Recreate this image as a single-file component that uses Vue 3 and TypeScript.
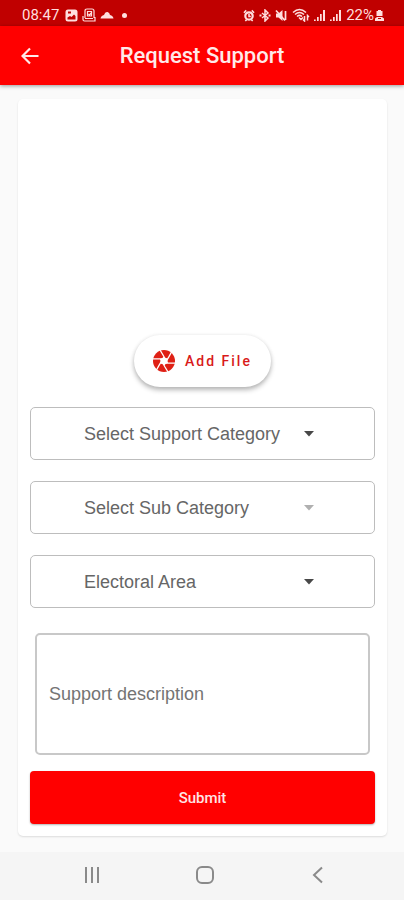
<script setup lang="ts">
import { ref } from 'vue'

interface Picker {
  id: string
  label: string
  disabled: boolean
}

const pickers: Picker[] = [
  { id: 'category', label: 'Select Support Category', disabled: false },
  { id: 'sub-category', label: 'Select Sub Category', disabled: true },
  { id: 'area', label: 'Electoral Area', disabled: false },
]

const description = ref('')
const blades = [0, 60, 120, 180, 240, 300]
</script>

<template>
  <div class="screen">
    <div class="status">
      <div class="status-group">
        <span class="clock">08:47</span>
        <svg class="icon" width="13" height="13" viewBox="0 0 13 13">
          <rect x="0.500" y="0.500" width="12" height="12" rx="2.500" fill="currentColor" />
          <path d="M2.500 10.500v-2L5 7l1.500 1L9 5.500l1.500 1.500v3.500z" fill="#c00000" />
          <rect x="3" y="2.500" width="3" height="2" fill="#c00000" />
        </svg>
        <svg class="icon" width="14" height="14" viewBox="0 0 14 14" fill="none" stroke="currentColor" stroke-width="1.200">
          <path d="M3 10V3q0-2 2-2h5q2 0 2 2v7M1 8v3.500Q1 13 2.500 13H13V9M3 10.500h8" />
          <path d="M5.500 3.500h4V8h-4zM6.500 6l1 1 2.500-3" />
        </svg>
        <svg class="icon" width="14" height="12" viewBox="0 0 14 12">
          <path d="M0.500 9.500Q1 6.500 4 6 5 2.500 7.500 3q2 .5 2.500 3 3 .5 3.500 3.500z" fill="currentColor" />
        </svg>
        <span class="dot"></span>
      </div>
      <div class="status-group">
        <svg class="icon" width="12" height="13" viewBox="0 0 13 13">
          <circle cx="6.500" cy="7" r="4" fill="none" stroke="currentColor" stroke-width="2.400" />
          <path d="M1 3.500 3.500 1M9.500 1 12 3.500M2.500 12.500l1.500-1.500M10.500 12.500 9 11M6.500 5v2.500H8.500" fill="none" stroke="currentColor" stroke-width="1.700" />
        </svg>
        <svg class="icon" width="12" height="13" viewBox="0 0 12 13" fill="none" stroke="currentColor" stroke-width="1.500">
          <path d="m3 4 6 5-3 3V1l3 3-6 5" />
          <path d="M1.500 5.500v2M10.500 5.500v2" stroke-width="2" />
        </svg>
        <svg class="icon" width="13" height="13" viewBox="0 0 13 13">
          <path d="M1 4.500h2.500L7.500 1v11L3.500 8.500H1z" fill="currentColor" />
          <path d="M1 1.500 10 11.500M10.500 2v9" stroke="currentColor" stroke-width="1.700" />
        </svg>
        <svg class="icon" width="18" height="14" viewBox="0 0 18 14" fill="none" stroke="currentColor" stroke-width="1.500">
          <path d="M1 4.500q6.500-6 13 0M3 6.500q4.500-4 9 0M5 8.500q2.500-2.200 5 0" />
          <path d="m7 9.500 2 2 2-2M12.500 8v5L11 11.500M15.500 12.500V7.500L17 9" />
        </svg>
        <svg v-for="n in 2" :key="n" class="icon" width="12" height="13" viewBox="0 0 12 13" fill="currentColor">
          <path d="M0 10.500h1.700V12H0zM3 8h1.700v4H3zM6 5h1.700v7H6zM9 1h2v11H9z" />
        </svg>
        <span class="battery-text">22%</span>
        <svg class="icon" width="9" height="13" viewBox="0 0 9 13" fill="currentColor">
          <path d="M3 1h3v1h1.500v5h-6V2H3zM0 12V9.500L2 8h5l2 1.500V12z" />
          <path d="M3 9.500h3" stroke="#c00000" />
        </svg>
      </div>
    </div>

    <header class="app-bar">
      <button class="back" type="button" aria-label="Back">
        <svg width="18" height="18" viewBox="0 0 18 18" fill="none" stroke="currentColor" stroke-width="2.200">
          <path d="M17.500 9H2M9 1.500 1.500 9 9 16.500" />
        </svg>
      </button>
      <h1 class="title">Request Support</h1>
    </header>

    <main class="content">
      <form class="card" @submit.prevent>
        <div class="preview"></div>
        <button class="add-file" type="button">
          <svg width="22" height="22" viewBox="0 0 22 22">
            <circle cx="11" cy="11" r="11" fill="#df2015" />
            <path d="m11 7 3.500 2v4L11 15l-3.500-2V9z" fill="#fff" />
            <path
              v-for="angle in blades"
              :key="angle"
              d="M14.500 13 10 5 7 0"
              :transform="`rotate(${angle} 11 11)`"
              fill="none"
              stroke="#fff"
              stroke-width="1.300"
            />
          </svg>
          <span>Add File</span>
        </button>

        <div class="pickers">
          <div v-for="picker in pickers" :key="picker.id" class="picker">
            <select :id="picker.id" class="select" :aria-label="picker.label" :disabled="picker.disabled">
              <option>{{ picker.label }}</option>
            </select>
            <svg class="caret" :class="{ muted: picker.disabled }" width="10" height="6" viewBox="0 0 10 6">
              <path d="M0 0h10L5 5.500z" fill="currentColor" />
            </svg>
          </div>
        </div>

        <textarea
          v-model="description"
          class="description"
          aria-label="Support description"
          placeholder="Support description"
        ></textarea>
        <button class="submit" type="submit">Submit</button>
      </form>
    </main>

    <nav class="system-nav">
      <button class="nav-button" type="button" aria-label="Recent apps">
        <svg width="18" height="18" viewBox="0 0 18 18" stroke="currentColor" stroke-width="2">
          <path d="M3 1v16M9 1v16M15 1v16" />
        </svg>
      </button>
      <button class="nav-button" type="button" aria-label="Home">
        <svg width="18" height="18" viewBox="0 0 18 18" fill="none" stroke="currentColor" stroke-width="2">
          <rect x="1" y="1" width="16" height="16" rx="5" />
        </svg>
      </button>
      <button class="nav-button" type="button" aria-label="Back to previous screen">
        <svg width="18" height="18" viewBox="0 0 18 18" fill="none" stroke="currentColor" stroke-width="2">
          <path d="M13 1.500 5 9l8 7.500" />
        </svg>
      </button>
    </nav>
  </div>
</template>

<style>
body {
  margin: 0;
}
</style>

<style scoped>
.screen {
  display: flex;
  flex-direction: column;
  min-height: 100vh;
  background: #fafafa;
  color: #666;
  font-family: "Liberation Sans", Arial, sans-serif;
}

.screen * {
  box-sizing: border-box;
}

button,
select,
textarea {
  margin: 0;
  border: 0;
  font-family: inherit;
  color: inherit;
}

svg {
  flex: none;
}

.status {
  display: flex;
  justify-content: space-between;
  height: 26px;
  padding: 4px 20px 0 22px;
  background: #c00000;
  color: #ffdede;
  font-family: Roboto, sans-serif;
  font-size: 15px;
}

.status-group {
  display: flex;
  align-items: center;
  gap: 4px;
}

.clock {
  margin-right: 2px;
}

.dot {
  width: 5px;
  height: 5px;
  margin-left: 4px;
  border-radius: 50%;
  background: currentColor;
}

.battery-text {
  margin-right: -3px;
}

.app-bar {
  display: grid;
  grid-template-columns: 60px 1fr 60px;
  align-items: center;
  height: 59px;
  background: #ff0000;
  color: #ffe9e9;
  box-shadow: 0 1px 4px rgba(0, 0, 0, 0.4);
}

.back {
  display: flex;
  align-items: center;
  justify-content: center;
  height: 48px;
  padding: 0;
  background: none;
}

.title {
  margin: 0;
  font-family: Roboto, sans-serif;
  font-size: 22px;
  font-weight: 500;
  line-height: 28px;
  text-align: center;
}

.content {
  flex: 1;
  padding: 14px 17px 16px 18px;
}

.card {
  display: flex;
  flex-direction: column;
  padding: 0 12px 12px;
  border-radius: 5px;
  background: #fff;
  box-shadow: 0 1px 2px rgba(0, 0, 0, 0.12);
}

.preview {
  height: 236px;
}

.add-file {
  display: flex;
  align-items: center;
  align-self: center;
  gap: 10px;
  height: 52px;
  padding: 0 19px;
  border-radius: 26px;
  background: #fff;
  color: #d91a1a;
  font-family: Roboto, sans-serif;
  font-size: 14px;
  font-weight: 500;
  letter-spacing: 2px;
  box-shadow: 0 3px 5px rgba(0, 0, 0, 0.28), 0 0 4px rgba(0, 0, 0, 0.06);
}

.pickers {
  display: flex;
  flex-direction: column;
  gap: 21px;
  margin-top: 20px;
}

.picker {
  position: relative;
}

.select {
  display: block;
  width: 100%;
  height: 53px;
  padding: 0 53px;
  border: 1px solid #bdbdbd;
  border-radius: 5px;
  background: #fff;
  color: #666;
  font-size: 18px;
  opacity: 1;
  appearance: none;
}

.caret {
  position: absolute;
  top: 24px;
  right: 61px;
  color: #484848;
  pointer-events: none;
}

.caret.muted {
  color: #b0b0b0;
}

.description {
  height: 122px;
  margin: 25px 5px 0;
  padding: 49px 12px;
  border: 2px solid #c8c8c8;
  border-radius: 5px;
  background: #fff;
  color: #666;
  font-size: 18px;
  line-height: 20px;
  resize: none;
}

.description::placeholder {
  color: #747474;
  opacity: 1;
}

.submit {
  height: 53px;
  margin-top: 16px;
  border-radius: 4px;
  background: #ff0000;
  color: #ffe5e5;
  font-family: Roboto, sans-serif;
  font-size: 15px;
  font-weight: 500;
  box-shadow: 0 1px 2px rgba(0, 0, 0, 0.3);
}

.system-nav {
  display: flex;
  justify-content: center;
  gap: 65px;
  height: 48px;
  padding: 0 0 2px 5px;
  background: #f5f5f5;
  color: #8a8a8a;
}

.nav-button {
  display: flex;
  align-items: center;
  justify-content: center;
  width: 48px;
  padding: 0;
  background: none;
}
</style>
